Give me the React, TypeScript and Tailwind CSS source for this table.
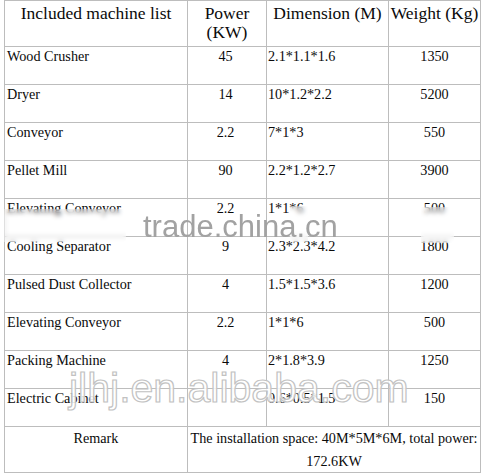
import React from "react";

const rows: [string, string, string, string][] = [
  ["Wood Crusher", "45", "2.1*1.1*1.6", "1350"],
  ["Dryer", "14", "10*1.2*2.2", "5200"],
  ["Conveyor", "2.2", "7*1*3", "550"],
  ["Pellet Mill", "90", "2.2*1.2*2.7", "3900"],
  ["Elevating Conveyor", "2.2", "1*1*6", "500"],
  ["Cooling Separator", "9", "2.3*2.3*4.2", "1800"],
  ["Pulsed Dust Collector", "4", "1.5*1.5*3.6", "1200"],
  ["Elevating Conveyor", "2.2", "1*1*6", "500"],
  ["Packing Machine", "4", "2*1.8*3.9", "1250"],
  ["Electric Cabinet", "", "0.6*0.5*1.5", "150"],
];

export default function App() {
  return (
    <div className="relative w-[482px] h-[476px] bg-white overflow-hidden font-['Liberation_Serif',serif] text-[#0a0a0a]">
      <div className="ml-[4px] w-[477px] grid grid-cols-[182px_78px_121px_91px] grid-rows-[45px_repeat(10,37px)_45px] gap-px p-px bg-[#bdbdbd]">
        <div className="bg-white text-center text-[17.5px] leading-[19px] pt-[3px]">Included machine list</div>
        <div className="bg-white text-center text-[17.5px] leading-[19px] pt-[3px]">
          Power
          <br />
          (KW)
        </div>
        <div className="bg-white text-center text-[17.5px] leading-[19px] pt-[3px] whitespace-nowrap">Dimension (M)</div>
        <div className="bg-white text-center text-[17.5px] leading-[19px] pt-[3px] whitespace-nowrap">Weight (Kg)</div>
        {rows.map((r, i) => (
          <React.Fragment key={i}>
            <div className="bg-white text-[14.2px] leading-[18px] pl-[2px] whitespace-nowrap">{r[0]}</div>
            <div className="bg-white text-[14.2px] leading-[18px] text-center pr-[3px]">{r[1]}</div>
            <div className="bg-white text-[14.2px] leading-[18px] pl-px whitespace-nowrap">{r[2]}</div>
            <div className="bg-white text-[14.2px] leading-[18px] text-center">{r[3]}</div>
          </React.Fragment>
        ))}
        <div className="bg-white text-center text-[14.2px] leading-[22px]">Remark</div>
        <div className="col-span-3 bg-white text-center text-[14.2px] leading-[23px]">
          <span className="whitespace-nowrap">The installation space: 40M*5M*6M, total power:</span>
          <br />
          172.6KW
        </div>
      </div>

      {/* blurred watermark patches */}
      <div className="absolute left-[4px] top-[209px] w-[122px] h-[33px] backdrop-blur-[2px] bg-white/20" />
      <div className="absolute left-[290px] top-[206px] w-[18px] h-[36px] backdrop-blur-[2px] bg-white/30" />
      <div className="absolute left-[421px] top-[207px] w-[33px] h-[36px] backdrop-blur-[2px] bg-white/30" />

      {/* trade.china.cn watermark */}
      <div className="absolute left-[143px] top-[211px] text-[31px] leading-none font-['Liberation_Sans',sans-serif] text-[#a2a2a2] whitespace-nowrap">
        trade.china.cn
      </div>

      {/* alibaba outline watermark */}
      <div className="absolute left-[69px] top-[368px] text-[41px] leading-none font-['Liberation_Sans',sans-serif] text-white/85 [-webkit-text-stroke:1.2px_#c2c2c2] whitespace-nowrap">
        jlhj.en.alibaba.com
      </div>
    </div>
  );
}
